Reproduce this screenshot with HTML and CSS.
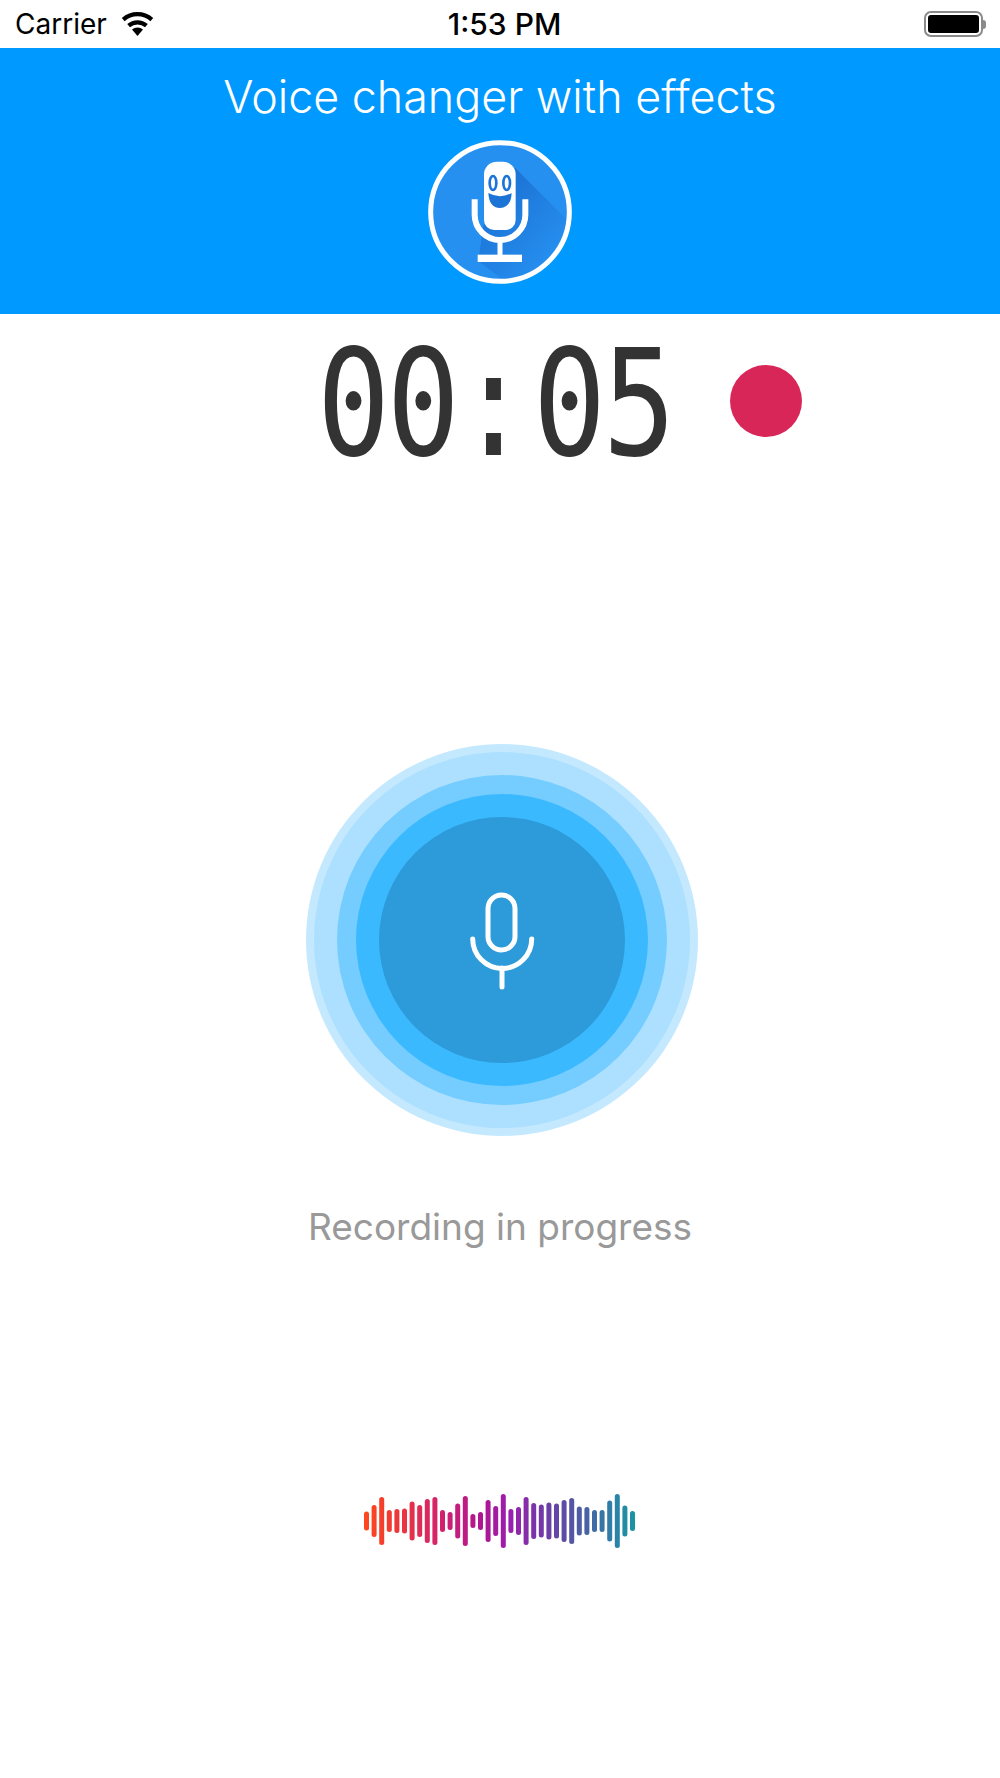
FILE: index.html
```html
<!DOCTYPE html>
<html>
<head>
<meta name="viewport" content="width=device-width, initial-scale=1.0">
<link rel="stylesheet" href="styles.css">
</head>
<body>
<div class="status">
  <div class="status-left">
    <span class="carrier">Carrier</span>
    <svg class="wifi" viewBox="0 0 35 24">
      <path d="M17.5 24 L12 17.6 A8.5 8.5 0 0 1 23 17.6 Z" fill="#000"/>
      <path d="M8.6 13.6 A13.6 13.6 0 0 1 26.4 13.6" fill="none" stroke="#000" stroke-width="4.2"/>
      <path d="M3.2 7.6 A21.5 21.5 0 0 1 31.8 7.6" fill="none" stroke="#000" stroke-width="4.2"/>
    </svg>
  </div>
  <span class="clock">1:53 PM</span>
  <div class="status-right">
    <div class="battery"><div class="battery-fill"></div></div>
    <div class="battery-nub"></div>
  </div>
</div>

<div class="header">
  <h1 class="title">Voice changer with effects</h1>
  <svg class="logo" viewBox="84 62 432 432">
    <defs>
      <clipPath id="logoclip"><circle cx="300" cy="278" r="210"/></clipPath>
      <linearGradient id="logoshade" x1="0.25" y1="0.2" x2="0.8" y2="0.8">
        <stop offset="0" stop-color="#1c74d6"/>
        <stop offset="1" stop-color="#2690f0"/>
      </linearGradient>
    </defs>
    <circle cx="300" cy="278" r="210" fill="#2690f0"/>
    <path d="M345 145 L520 320 L520 494 L325 494 L235 425 L250 320 Z" fill="url(#logoshade)" clip-path="url(#logoclip)"/>
    <path d="M224 240 V286 A76 76 0 0 0 376 286 V240" fill="none" stroke="#fff" stroke-width="18"/>
    <path d="M300 360 V412" stroke="#fff" stroke-width="15"/>
    <rect x="233" y="406" width="133" height="22" fill="#fff"/>
    <path d="M252 165 A38 38 0 0 1 290 127 H309 A38 38 0 0 1 347 165 V302 A30 30 0 0 1 317 332 H282 A30 30 0 0 1 252 302 Z" fill="#fff"/>
    <ellipse cx="279" cy="191" rx="14" ry="25" fill="#1c74d6"/>
    <ellipse cx="279" cy="191" rx="6" ry="17" fill="#fff"/>
    <ellipse cx="320" cy="191" rx="14" ry="25" fill="#1c74d6"/>
    <ellipse cx="320" cy="191" rx="6" ry="17" fill="#fff"/>
    <path d="M265 221 Q300 240 335 221 Q333 265 300 266 Q267 265 265 221 Z" fill="#1c74d6"/>
    <circle cx="300" cy="278" r="208" fill="none" stroke="#fff" stroke-width="15"/>
  </svg>
</div>

<div class="timer">
  <span class="digits">00</span>
  <span class="colon">:</span>
  <span class="digits">05</span>
  <div class="rec-dot"></div>
</div>

<div class="rings">
  <div class="ring ring2">
    <div class="ring ring3">
      <div class="ring ring4">
        <div class="ring ring5">
          <svg class="mic" viewBox="0 0 70 100">
            <rect x="21" y="5" width="27" height="55" rx="13.5" fill="none" stroke="#fff" stroke-width="5"/>
            <path d="M5.7 49 A29.5 29.5 0 0 0 64.7 49" fill="none" stroke="#fff" stroke-width="5" stroke-linecap="round"/>
            <path d="M35 78 V97" stroke="#fff" stroke-width="5" stroke-linecap="round"/>
          </svg>
        </div>
      </div>
    </div>
  </div>
</div>

<p class="caption">Recording in progress</p>

<svg class="wave" viewBox="0 0 284 62">
  <defs>
    <linearGradient id="wavegrad" gradientUnits="userSpaceOnUse" x1="0" y1="0" x2="284" y2="0">
      <stop offset="0" stop-color="#ff4a1c"/>
      <stop offset="0.12" stop-color="#ee3838"/>
      <stop offset="0.26" stop-color="#d62468"/>
      <stop offset="0.42" stop-color="#b01592"/>
      <stop offset="0.52" stop-color="#9a1fae"/>
      <stop offset="0.66" stop-color="#6a3fa6"/>
      <stop offset="0.78" stop-color="#4a60a4"/>
      <stop offset="0.88" stop-color="#2f7fa8"/>
      <stop offset="1" stop-color="#109fa0"/>
    </linearGradient>
  </defs>
  <g fill="url(#wavegrad)">
    <rect x="2" y="21.5" width="5" height="19" rx="2.5"/>
    <rect x="9.6" y="15" width="5" height="32" rx="2.5"/>
    <rect x="17.2" y="7" width="5" height="48" rx="2.5"/>
    <rect x="24.8" y="20" width="5" height="22" rx="2.5"/>
    <rect x="32.4" y="19" width="5" height="24" rx="2.5"/>
    <rect x="40" y="18.5" width="5" height="25" rx="2.5"/>
    <rect x="47.6" y="11.5" width="5" height="39" rx="2.5"/>
    <rect x="55.2" y="15" width="5" height="32" rx="2.5"/>
    <rect x="62.8" y="9" width="5" height="44" rx="2.5"/>
    <rect x="70.4" y="7" width="5" height="48" rx="2.5"/>
    <rect x="78" y="20" width="5" height="22" rx="2.5"/>
    <rect x="85.6" y="22" width="5" height="18" rx="2.5"/>
    <rect x="93.2" y="13.5" width="5" height="35" rx="2.5"/>
    <rect x="100.8" y="6" width="5" height="50" rx="2.5"/>
    <rect x="108.4" y="24" width="5" height="14" rx="2.5"/>
    <rect x="116" y="22" width="5" height="18" rx="2.5"/>
    <rect x="123.6" y="10" width="5" height="42" rx="2.5"/>
    <rect x="131.2" y="16" width="5" height="30" rx="2.5"/>
    <rect x="138.8" y="4" width="5" height="54" rx="2.5"/>
    <rect x="146.4" y="19" width="5" height="24" rx="2.5"/>
    <rect x="154" y="17" width="5" height="28" rx="2.5"/>
    <rect x="161.6" y="7" width="5" height="48" rx="2.5"/>
    <rect x="169.2" y="13" width="5" height="36" rx="2.5"/>
    <rect x="176.8" y="14.5" width="5" height="33" rx="2.5"/>
    <rect x="184.4" y="12.5" width="5" height="37" rx="2.5"/>
    <rect x="192" y="13.5" width="5" height="35" rx="2.5"/>
    <rect x="199.6" y="10" width="5" height="42" rx="2.5"/>
    <rect x="207.2" y="8" width="5" height="46" rx="2.5"/>
    <rect x="214.8" y="16.5" width="5" height="29" rx="2.5"/>
    <rect x="222.4" y="17" width="5" height="28" rx="2.5"/>
    <rect x="230" y="20" width="5" height="22" rx="2.5"/>
    <rect x="237.6" y="20" width="5" height="22" rx="2.5"/>
    <rect x="245.2" y="10.5" width="5" height="41" rx="2.5"/>
    <rect x="252.8" y="4" width="5" height="54" rx="2.5"/>
    <rect x="260.4" y="15.5" width="5" height="31" rx="2.5"/>
    <rect x="268" y="21" width="5" height="20" rx="2.5"/>
  </g>
</svg>
</body>
</html>
```

FILE: styles.css
```css
html, body {
  margin: 0;
  padding: 0;
}
body {
  background-color: #fff;
  width: 1000px;
  height: 1778px;
  overflow: hidden;
  font-family: Inter, "Liberation Sans", sans-serif;
}

/* status bar */
.status {
  height: 48px;
  display: grid;
  grid-template-columns: 1fr auto 1fr;
  align-items: center;
  padding: 0 14px 0 15px;
  color: #000;
  font-size: 28px;
}
.status-left {
  display: flex;
  align-items: center;
  gap: 13px;
}
.wifi {
  width: 35px;
  height: 24px;
}
.clock {
  margin-left: 8px;
  font-size: 30px;
  font-weight: 500;
}
.status-right {
  display: flex;
  align-items: center;
  justify-content: flex-end;
}
.battery {
  width: 59px;
  height: 26px;
  box-sizing: border-box;
  border: 2px solid #8a8a8a;
  border-radius: 7px;
  padding: 2px;
}
.battery-fill {
  height: 100%;
  background-color: #000;
  border-radius: 3px;
}
.battery-nub {
  width: 3px;
  height: 9px;
  background-color: #8a8a8a;
  border-radius: 0 3px 3px 0;
}

/* blue header */
.header {
  height: 266px;
  box-sizing: border-box;
  background-color: #0099ff;
  display: flex;
  flex-direction: column;
  align-items: center;
}
.title {
  margin: 20px 0 0;
  color: #fff;
  font-size: 44.8px;
  font-weight: 300;
  line-height: 58px;
}
.logo {
  width: 144px;
  height: 144px;
  margin-top: 14px;
}

/* timer */
.timer {
  height: 140px;
  margin-top: 20px;
  display: flex;
  align-items: center;
  padding-left: 317px;
  color: #333;
  font-family: "DejaVu Sans Mono", monospace;
  font-size: 148px;
  line-height: 140px;
}
.digits {
  width: 140px;
  letter-spacing: -4px;
  transform: scaleX(0.82);
  transform-origin: left center;
}
.colon {
  width: 76px;
  transform: scaleX(0.82);
  transform-origin: left center;
}
.rec-dot {
  width: 72px;
  height: 72px;
  margin-left: 57px;
  margin-bottom: 7px;
  border-radius: 50%;
  background-color: #d92659;
}

/* record button */
.rings {
  width: 392px;
  height: 392px;
  margin: 270px 0 0 306px;
  border-radius: 50%;
  background-color: #c4e9ff;
  display: flex;
  align-items: center;
  justify-content: center;
}
.ring {
  border-radius: 50%;
  display: flex;
  align-items: center;
  justify-content: center;
}
.ring2 {
  width: 376px;
  height: 376px;
  background-color: #ade0ff;
}
.ring3 {
  width: 330px;
  height: 330px;
  background-color: #75ccff;
}
.ring4 {
  width: 292px;
  height: 292px;
  background-color: #3bb9ff;
}
.ring5 {
  width: 246px;
  height: 246px;
  background-color: #2d9bd9;
}
.mic {
  width: 70px;
  height: 100px;
}

.caption {
  margin: 66px 0 0;
  color: #999;
  font-size: 37px;
  line-height: 50px;
  text-align: center;
}

.wave {
  display: block;
  width: 284px;
  height: 62px;
  margin: 238px 0 0 362px;
}
```
